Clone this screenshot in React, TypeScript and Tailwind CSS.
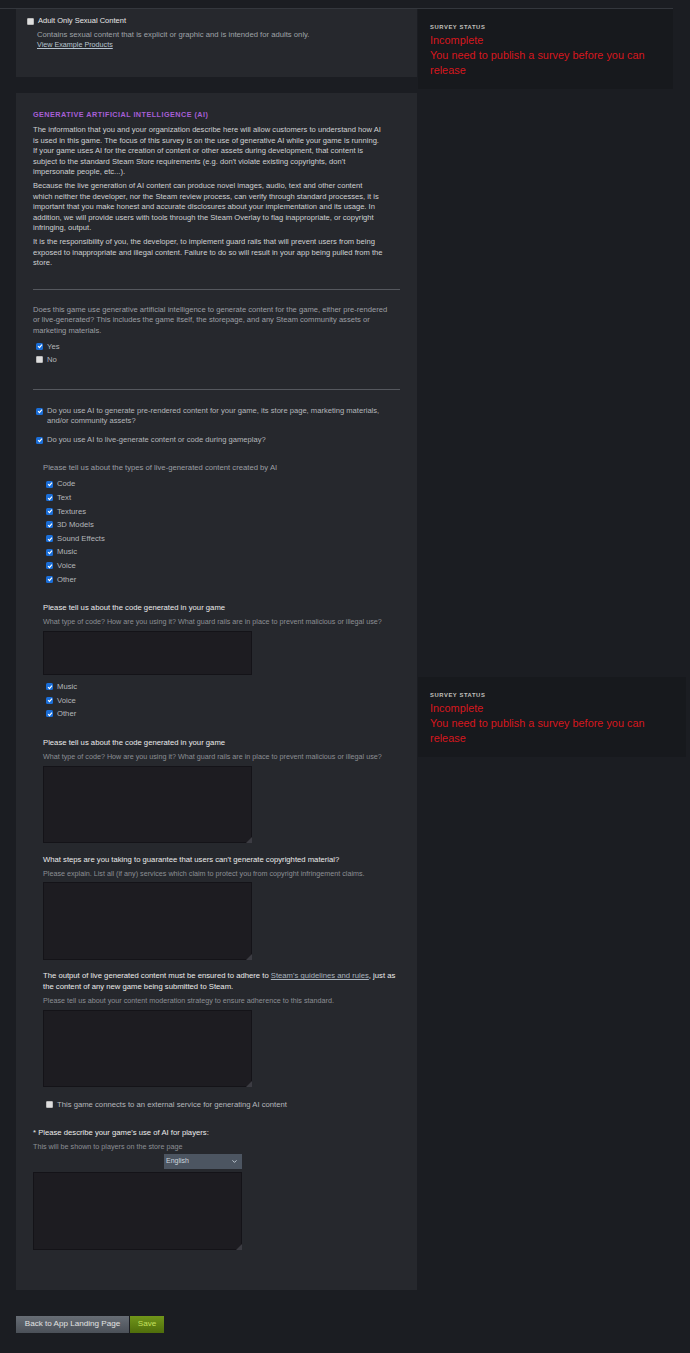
import { ChevronDown } from "lucide-react";

function Check({ checked }: { checked?: boolean }) {
  if (checked) {
    return (
      <span className="flex h-[7px] w-[7px] shrink-0 items-center justify-center rounded-[1.5px] bg-[#1a6ed8]">
        <svg viewBox="0 0 10 10" className="h-[6px] w-[6px]">
          <path d="M1.8 5.3 4.1 7.6 8.3 2.6" stroke="white" strokeWidth="1.9" fill="none" />
        </svg>
      </span>
    );
  }
  return <span className="h-[7px] w-[7px] shrink-0 rounded-[1px] border border-[#b9b9b9] bg-[#dedede]" />;
}

function CheckRow({ label, checked = true }: { label: string; checked?: boolean }) {
  return (
    <div className="flex h-[13.6px] items-center gap-[4px] pl-[3px] text-[7.7px] text-[#b4b7bb]">
      <Check checked={checked} />
      <span>{label}</span>
    </div>
  );
}

function SurveyStatus({ wide }: { wide?: boolean }) {
  return (
    <div className={`${wide ? "w-[268px]" : "w-[255px]"} h-[80px] bg-[#17191d] pl-[12px] pt-[14px]`}>
      <div className="text-[5.8px] font-bold leading-[8px] tracking-[0.6px] text-[#c3c1be]">SURVEY STATUS</div>
      <div className="mt-[2px] pr-[14px] text-[10.9px] leading-[15px] text-[#d6171d]">
        <div>Incomplete</div>
        <div>You need to publish a survey before you can release</div>
      </div>
    </div>
  );
}

function TextBox({ h, grip = true, w = "w-[209px]" }: { h: string; grip?: boolean; w?: string }) {
  return (
    <div className={`relative ${w}`}>
      <textarea className={`block w-full ${h} resize-none border border-[#141318] bg-[#1d1c21] outline-none`} />
      {grip && (
        <span className="absolute bottom-0 right-0 h-0 w-0 border-b-[6px] border-l-[6px] border-b-[#3c3c43] border-l-transparent" />
      )}
    </div>
  );
}

function Field({
  title,
  hint,
  children,
  h,
  grip,
}: {
  title: React.ReactNode;
  hint: string;
  children?: React.ReactNode;
  h: string;
  grip?: boolean;
}) {
  return (
    <div>
      <div className="text-[7.7px] leading-[10.5px] text-[#ebebeb]">{title}</div>
      <div className="mt-[3.5px] text-[7.2px] leading-[9px] text-[#8c8f94]">{hint}</div>
      <div className="mt-[4.8px]">
        <TextBox h={h} grip={grip} />
      </div>
      {children}
    </div>
  );
}

export default function App() {
  return (
    <div className="min-h-[1353px] bg-[#1b1d22] font-['Liberation_Sans',Arial,sans-serif]">
      <div className="h-[8px]" />
      <div className="h-px w-[673px] bg-[#34373d]" />

      <div className="flex">
        <main className="ml-[16px] w-[401px] shrink-0">
          {/* Adult content option */}
          <section className="h-[68px] bg-[#26282d] pl-[11px] pt-[7px]">
            <div className="flex items-center gap-[4px] text-[7.5px] leading-[10px] text-[#e6e6e6]">
              <Check />
              <span>Adult Only Sexual Content</span>
            </div>
            <div className="mt-[4px] pl-[10px] text-[7.7px] leading-[10px] text-[#9fa2a7]">
              Contains sexual content that is explicit or graphic and is intended for adults only.
              <div className="text-[7.2px] text-[#b8c4cf] underline">View Example Products</div>
            </div>
          </section>

          {/* Generative AI survey */}
          <section className="mt-[16px] bg-[#26282d] px-[17px] pb-[40px] pt-[17px]">
            <h2 className="text-[7.25px] font-bold leading-[10px] tracking-[0.45px] text-[#a75fd6]">
              GENERATIVE ARTIFICIAL INTELLIGENCE (AI)
            </h2>
            <div className="mt-[5px] space-y-[3.5px] whitespace-nowrap text-[7.6px] leading-[10.5px] text-[#cfd1d3]">
              <p>
                The information that you and your organization describe here will allow customers to understand how AI
                <br />
                is used in this game. The focus of this survey is on the use of generative AI while your game is running.
                <br />
                If your game uses AI for the creation of content or other assets during development, that content is
                <br />
                subject to the standard Steam Store requirements (e.g. don't violate existing copyrights, don't
                <br />
                impersonate people, etc...).
              </p>
              <p>
                Because the live generation of AI content can produce novel images, audio, text and other content
                <br />
                which neither the developer, nor the Steam review process, can verify through standard processes, it is
                <br />
                important that you make honest and accurate disclosures about your implementation and its usage. In
                <br />
                addition, we will provide users with tools through the Steam Overlay to flag inappropriate, or copyright
                <br />
                infringing, output.
              </p>
              <p>
                It is the responsibility of you, the developer, to implement guard rails that will prevent users from being
                <br />
                exposed to inappropriate and illegal content. Failure to do so will result in your app being pulled from the
                <br />
                store.
              </p>
            </div>

            <hr className="mt-[20px] border-0 border-t border-[#55585e]" />

            <p className="mt-[15px] whitespace-nowrap text-[7.6px] leading-[10.5px] text-[#9c9fa4]">
              Does this game use generative artificial intelligence to generate content for the game, either pre-rendered
              <br />
              or live-generated? This includes the game itself, the storepage, and any Steam community assets or
              <br />
              marketing materials.
            </p>
            <div className="mt-[3.5px]">
              <CheckRow label="Yes" />
              <CheckRow label="No" checked={false} />
            </div>

            <hr className="mt-[22px] border-0 border-t border-[#55585e]" />

            <div className="mt-[16px] flex items-start gap-[4px] pl-[3px] text-[7.6px] leading-[10.5px] text-[#b4b7bb]">
              <span className="mt-[2px]">
                <Check checked />
              </span>
              <span>
                Do you use AI to generate pre-rendered content for your game, its store page, marketing materials,
                <br />
                and/or community assets?
              </span>
            </div>
            <div className="mt-[8px] flex items-start gap-[4px] pl-[3px] text-[7.6px] leading-[10.5px] text-[#b4b7bb]">
              <span className="mt-[2px]">
                <Check checked />
              </span>
              <span>Do you use AI to live-generate content or code during gameplay?</span>
            </div>

            {/* Live-generated content details */}
            <div className="mt-[18px] pl-[10px]">
              <div className="text-[7.7px] leading-[10.5px] text-[#9c9fa4]">
                Please tell us about the types of live-generated content created by AI
              </div>
              <div className="mt-[3.7px]">
                {["Code", "Text", "Textures", "3D Models", "Sound Effects", "Music", "Voice", "Other"].map((t) => (
                  <CheckRow key={t} label={t} />
                ))}
              </div>

              <div className="mt-[17px]">
                <Field
                  title="Please tell us about the code generated in your game"
                  hint="What type of code? How are you using it? What guard rails are in place to prevent malicious or illegal use?"
                  h="h-[44px]"
                  grip={false}
                >
                  <div className="mt-[5px]">
                    {["Music", "Voice", "Other"].map((t) => (
                      <CheckRow key={t} label={t} />
                    ))}
                  </div>
                </Field>
              </div>

              <div className="mt-[17px]">
                <Field
                  title="Please tell us about the code generated in your game"
                  hint="What type of code? How are you using it? What guard rails are in place to prevent malicious or illegal use?"
                  h="h-[77px]"
                />
              </div>

              <div className="mt-[12px]">
                <Field
                  title="What steps are you taking to guarantee that users can't generate copyrighted material?"
                  hint="Please explain. List all (if any) services which claim to protect you from copyright infringement claims."
                  h="h-[78px]"
                />
              </div>

              <div className="mt-[11px]">
                <Field
                  title={
                    <>
                      The output of live generated content must be ensured to adhere to{" "}
                      <a className="text-[#a9b4bf] underline">Steam's guidelines and rules</a>, just as the content of
                      any new game being submitted to Steam.
                    </>
                  }
                  hint="Please tell us about your content moderation strategy to ensure adherence to this standard."
                  h="h-[77px]"
                />
              </div>

              <div className="mt-[11px]">
                <CheckRow label="This game connects to an external service for generating AI content" checked={false} />
              </div>
            </div>

            {/* Store page description */}
            <div className="mt-[17px] text-[7.7px] leading-[10.5px] text-[#ebebeb]">
              * Please describe your game's use of AI for players:
            </div>
            <div className="mt-[3.5px] text-[7.2px] leading-[9px] text-[#8c8f94]">
              This will be shown to players on the store page
            </div>
            <div className="mt-[3px] flex w-[209px] justify-end">
              <div className="flex h-[14.4px] w-[78px] items-center justify-between bg-[#4c5561] pl-[2px] pr-[4px] text-[7px] text-[#cdd6de]">
                <span>English</span>
                <ChevronDown className="h-[7px] w-[7px]" strokeWidth={3} />
              </div>
            </div>
            <div className="mt-[3px]">
              <TextBox h="h-[78px]" />
            </div>
          </section>

          <div className="mt-[26px] flex gap-px">
            <button className="h-[17px] w-[113px] bg-gradient-to-b from-[#676d75] to-[#4b5058] text-[8.1px] text-[#e2e2e2]">
              Back to App Landing Page
            </button>
            <button className="h-[17px] w-[34px] bg-gradient-to-b from-[#71961a] to-[#4f6d0b] text-[8.1px] text-[#c5e05e]">
              Save
            </button>
          </div>
        </main>

        <aside className="ml-px flex flex-col">
          <SurveyStatus />
          <div className="mt-[588px]">
            <SurveyStatus wide />
          </div>
        </aside>
      </div>
    </div>
  );
}
